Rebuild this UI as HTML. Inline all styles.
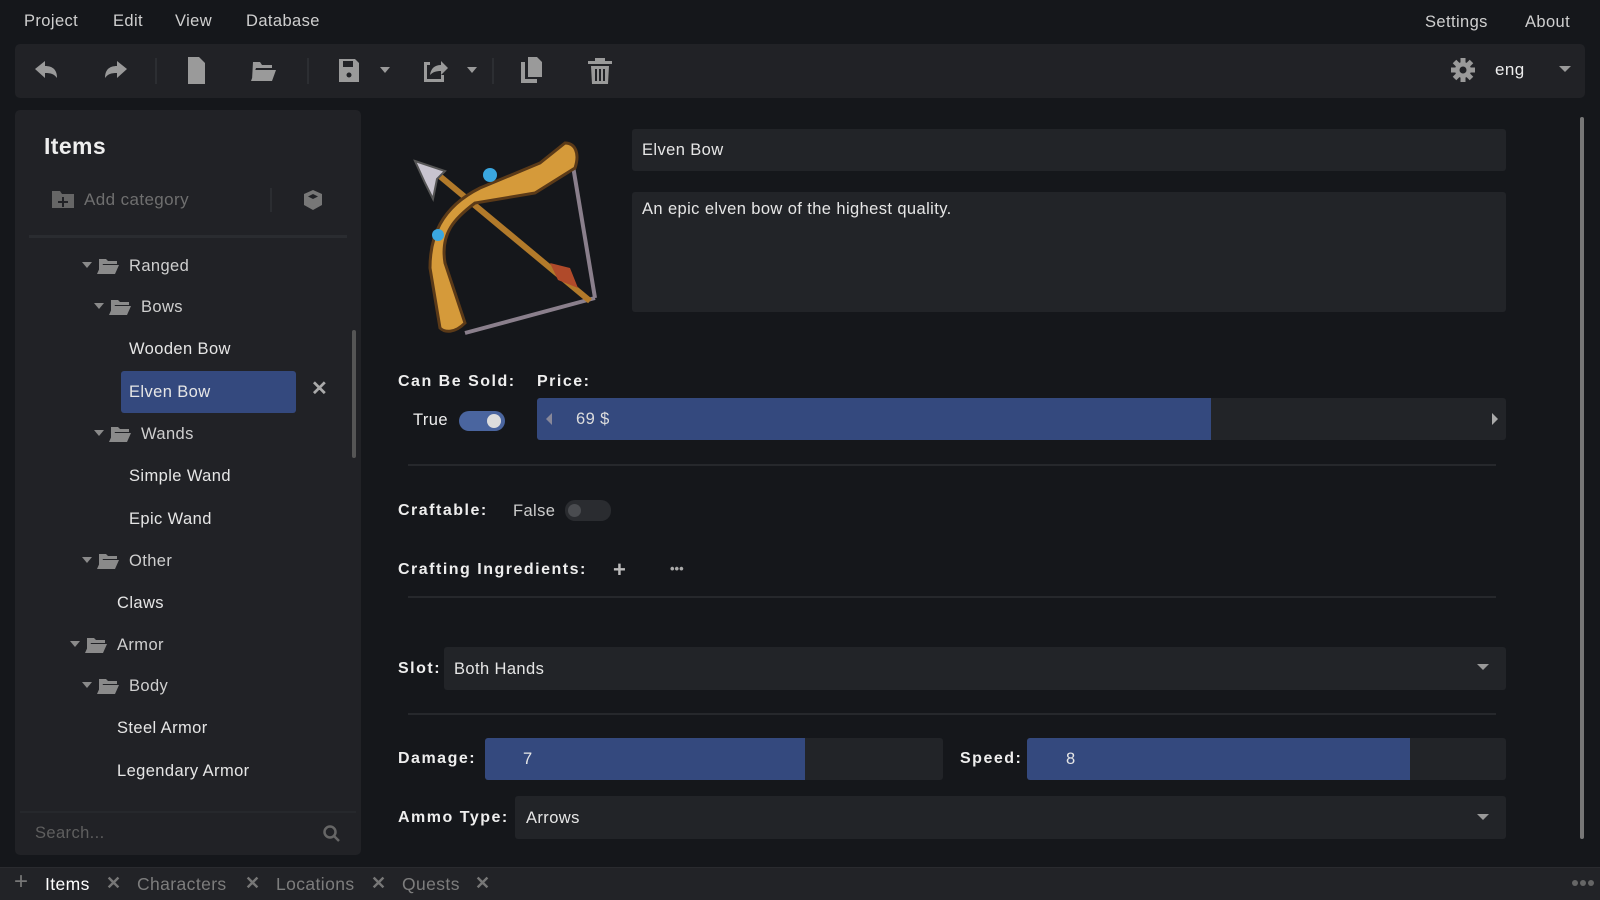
<!DOCTYPE html>
<html><head><meta charset="utf-8"><style>
*{box-sizing:border-box;margin:0;padding:0}
body{width:1600px;height:900px;background:#15171b;font-family:"Liberation Sans",sans-serif;color:#e6e6e6;position:relative;overflow:hidden;font-size:16.5px;letter-spacing:0.4px}
.a{position:absolute;white-space:nowrap}
.menu{color:#cfcfcf;font-size:16.5px;top:12px}
.panel{background:#212226;border-radius:5px}
.lbl{font-weight:bold;letter-spacing:1.5px;color:#eee;font-size:16px}
.inp{background:#222428;border-radius:3px}
.tree{color:#cfcfcf}
.gray{color:#8a8a8a}
.sep{position:absolute;height:2px;background:#26282c}
.tab{color:#7d7d7d;font-size:17.5px;top:874px}
.x{color:#777;font-weight:bold;font-size:18px;top:873px}
</style></head><body>
<div class="a menu" style="left:24px">Project</div>
<div class="a menu" style="left:113px">Edit</div>
<div class="a menu" style="left:175px">View</div>
<div class="a menu" style="left:246px">Database</div>
<div class="a menu" style="left:1425px;top:13px">Settings</div>
<div class="a menu" style="left:1525px;top:13px">About</div>

<div class="a panel" style="left:15px;top:44px;width:1570px;height:54px"></div>
<svg class="a" style="left:15px;top:44px" width="1570" height="54" fill="#9a9a9a">
<path d="M20 25 l10-8 v5 c8 0 12 4 12 12 c-3-4-6-5-12-5 v5z"/>
<path d="M112 25 l-10-8 v5 c-8 0-12 4-12 12 c3-4 6-5 12-5 v5z"/>
<rect x="140" y="14" width="2" height="26" fill="#2c2e32"/>
<path d="M173 13 h11 l6 6 v21 h-17z"/>
<path d="M238 18 h7 l2 3 h10 v3 h-16 l-4 12 h-0z M240 26 h21 l-4 11 h-21z"/>
<rect x="292" y="14" width="2" height="26" fill="#2c2e32"/>
<path d="M324 15 h16 l4 4 v19 h-20z" /><rect x="328" y="17" width="10" height="6" fill="#212226"/><circle cx="334" cy="31" r="2.5" fill="#212226"/>
<path d="M365 23 h10 l-5 6z"/>
<path d="M409 18 h6 v3 h-3 v14 h14 v-4 h3 v7 h-20z M415 31 c1-7 5-10 11-10 v-4 l7 7 l-7 7 v-4 c-5 0-8 1-11 4z"/>
<path d="M452 23 h10 l-5 6z"/>
<rect x="477" y="14" width="2" height="26" fill="#2c2e32"/>
<path d="M506 18 h4 v17 h12 v4 h-16z M513 13 h9 l5 5 v15 h-14z"/>
<path d="M580 14 h10 v3 h7 v3 h-24 v-3 h7z M576 22 h18 l-1 18 h-16z"/><rect x="580" y="25" width="2" height="12" fill="#212226"/><rect x="584" y="25" width="2" height="12" fill="#212226"/><rect x="588" y="25" width="2" height="12" fill="#212226"/>
<g transform="translate(1448,26)"><circle r="8"/><g><rect x="-2.5" y="-12" width="5" height="24"/><rect x="-12" y="-2.5" width="24" height="5"/><rect x="-2.5" y="-12" width="5" height="24" transform="rotate(45)"/><rect x="-2.5" y="-12" width="5" height="24" transform="rotate(-45)"/></g><circle r="3.5" fill="#212226"/></g>
<path d="M1544 22 h12 l-6 6z"/>
</svg>
<div class="a" style="left:1495px;top:60px;color:#eee;font-size:17px">eng</div>

<div class="a panel" style="left:15px;top:110px;width:346px;height:745px"></div>
<div class="a" style="left:44px;top:133px;font-size:23px;font-weight:bold;color:#eee">Items</div>
<svg class="a" style="left:52px;top:189px" width="24" height="20" fill="#666"><path d="M0 2 h8 l2 3 h12 v14 h-22z"/><path d="M10 8 h2 v4 h4 v2 h-4 v4 h-2 v-4 h-4 v-2 h4z" fill="#212226"/></svg>
<div class="a gray" style="left:84px;top:190px;font-size:17px;color:#6f6f6f">Add category</div>
<div class="a" style="left:270px;top:188px;width:2px;height:24px;background:#2b2d31"></div>
<svg class="a" style="left:302px;top:189px" width="22" height="22" fill="#777"><path d="M11 1 l9 4 v11 l-9 5 l-9-5 v-11z"/><path d="M11 5 l5 2.5 l-5 2.5 l-5-2.5z" fill="#212226"/></svg>
<div class="sep" style="left:29px;top:235px;width:318px;height:3px;background:#2a2c30"></div>

<svg class="a" style="left:0;top:0" width="360" height="900" fill="#8a8a8a">
<g id="f"><path d="M82 262 h10 l-5 6z"/><path d="M99 259 h7 l2 2 h9 v3 h-14 l-4 9 z M101 265 h18 l-4 9 h-18z"/></g>
<use href="#f" transform="translate(12,41)"/><use href="#f" transform="translate(12,168)"/><use href="#f" transform="translate(0,295)"/><use href="#f" transform="translate(-12,379)"/><use href="#f" transform="translate(0,420)"/>
</svg>
<div class="a tree" style="left:129px;top:257px">Ranged</div>
<div class="a tree" style="left:141px;top:298px">Bows</div>
<div class="a" style="left:129px;top:340px">Wooden Bow</div>
<div class="a" style="left:121px;top:371px;width:175px;height:42px;background:#34497e;border-radius:3px"></div>
<div class="a" style="left:129px;top:383px">Elven Bow</div>
<div class="a" style="left:311px;top:376px;color:#aaa;font-size:20px;font-weight:bold">✕</div>
<div class="a tree" style="left:141px;top:425px">Wands</div>
<div class="a" style="left:129px;top:467px">Simple Wand</div>
<div class="a" style="left:129px;top:510px">Epic Wand</div>
<div class="a tree" style="left:129px;top:552px">Other</div>
<div class="a" style="left:117px;top:594px">Claws</div>
<div class="a tree" style="left:117px;top:636px">Armor</div>
<div class="a tree" style="left:129px;top:677px">Body</div>
<div class="a" style="left:117px;top:719px">Steel Armor</div>
<div class="a" style="left:117px;top:762px">Legendary Armor</div>
<div class="a" style="left:352px;top:330px;width:4px;height:128px;background:#555;border-radius:2px"></div>
<div class="sep" style="left:20px;top:811px;width:336px"></div>
<div class="a" style="left:35px;top:824px;color:#5f5f5f;font-size:16.5px">Search...</div>
<svg class="a" style="left:322px;top:824px" width="20" height="20" fill="none" stroke="#666" stroke-width="2.5"><circle cx="8" cy="8" r="5.5"/><path d="M12 12 l5 5"/></svg>

<svg class="a" style="left:410px;top:133px" width="195" height="220">
<line x1="160" y1="15" x2="185" y2="165" stroke="#8a7f8c" stroke-width="4"/>
<line x1="185" y1="165" x2="55" y2="200" stroke="#8a7f8c" stroke-width="4"/>
<line x1="20" y1="35" x2="180" y2="168" stroke="#b27a2a" stroke-width="6"/>
<path d="M5 28 l30 10 l-8 8 l-4 20 l-8-16z" fill="#c8c4cf" stroke="#555" stroke-width="2"/>
<path d="M140 130 l20 5 l8 20 l-20-8z" fill="#b04a2a"/>
<path d="M155 10 c10 0 15 10 10 25 l-40 25 l-60 10 c-20 15-35 30-30 60 l20 60 c-10 10-20 10-25 5 l-10-60 c0-30 10-60 50-80 l60-25z" fill="#d59a3a" stroke="#5b3a18" stroke-width="3"/>
<circle cx="80" cy="42" r="7" fill="#3aa7e0"/><circle cx="28" cy="102" r="6" fill="#3aa7e0"/>
</svg>

<div class="a inp" style="left:632px;top:129px;width:874px;height:42px"></div>
<div class="a" style="left:642px;top:141px">Elven Bow</div>
<div class="a inp" style="left:632px;top:192px;width:874px;height:120px"></div>
<div class="a" style="left:642px;top:200px">An epic elven bow of the highest quality.</div>

<div class="a lbl" style="left:398px;top:373px">Can Be Sold:</div>
<div class="a lbl" style="left:537px;top:373px">Price:</div>
<div class="a" style="left:413px;top:411px;color:#eee">True</div>
<div class="a" style="left:459px;top:411px;width:46px;height:20px;border-radius:10px;background:#4a659f"></div>
<div class="a" style="left:487px;top:414px;width:14px;height:14px;border-radius:7px;background:#ddd"></div>
<div class="a inp" style="left:537px;top:398px;width:969px;height:42px"></div>
<div class="a" style="left:537px;top:398px;width:674px;height:42px;background:#34497e;border-radius:3px 0 0 3px"></div>
<svg class="a" style="left:544px;top:412px" width="12" height="14" fill="#889"><path d="M8 1 v12 l-6-6z"/></svg>
<svg class="a" style="left:1489px;top:412px" width="12" height="14" fill="#aaa"><path d="M3 1 v12 l6-6z"/></svg>
<div class="a" style="left:576px;top:410px;color:#ddd">69 $</div>
<div class="sep" style="left:408px;top:464px;width:1088px"></div>

<div class="a lbl" style="left:398px;top:502px">Craftable:</div>
<div class="a" style="left:513px;top:502px;color:#ccc">False</div>
<div class="a" style="left:565px;top:500px;width:46px;height:21px;border-radius:10px;background:#2a2c30"></div>
<div class="a" style="left:568px;top:504px;width:13px;height:13px;border-radius:7px;background:#4a4c50"></div>

<div class="a lbl" style="left:398px;top:561px">Crafting Ingredients:</div>
<div class="a" style="left:613px;top:557px;font-size:22px;color:#bbb;font-weight:bold">+</div>
<div class="a" style="left:670px;top:561px;font-size:13px;color:#aaa;font-weight:bold;letter-spacing:0">•••</div>
<div class="sep" style="left:408px;top:596px;width:1088px"></div>

<div class="a lbl" style="left:398px;top:660px">Slot:</div>
<div class="a inp" style="left:444px;top:647px;width:1062px;height:43px"></div>
<div class="a" style="left:454px;top:660px">Both Hands</div>
<svg class="a" style="left:1476px;top:662px" width="14" height="10" fill="#999"><path d="M1 2 h12 l-6 6z"/></svg>
<div class="sep" style="left:408px;top:713px;width:1088px"></div>

<div class="a lbl" style="left:398px;top:750px">Damage:</div>
<div class="a inp" style="left:485px;top:738px;width:458px;height:42px"></div>
<div class="a" style="left:485px;top:738px;width:320px;height:42px;background:#34497e;border-radius:3px 0 0 3px"></div>
<div class="a" style="left:523px;top:750px">7</div>
<div class="a lbl" style="left:960px;top:750px">Speed:</div>
<div class="a inp" style="left:1027px;top:738px;width:479px;height:42px"></div>
<div class="a" style="left:1027px;top:738px;width:383px;height:42px;background:#34497e;border-radius:3px 0 0 3px"></div>
<div class="a" style="left:1066px;top:750px">8</div>

<div class="a lbl" style="left:398px;top:809px">Ammo Type:</div>
<div class="a inp" style="left:515px;top:796px;width:991px;height:43px"></div>
<div class="a" style="left:526px;top:809px">Arrows</div>
<svg class="a" style="left:1476px;top:812px" width="14" height="10" fill="#999"><path d="M1 2 h12 l-6 6z"/></svg>
<div class="a" style="left:1580px;top:117px;width:4px;height:722px;background:#777;border-radius:2px"></div>

<div class="a" style="left:0;top:867px;width:1600px;height:33px;background:#222327;border-top:1px solid #2a2b2f"></div>
<div class="a" style="left:14px;top:868px;color:#777;font-size:24px">+</div>
<div class="a" style="left:45px;top:874px;color:#fff;font-size:17.5px">Items</div>
<div class="a x" style="left:106px">✕</div>
<div class="a tab" style="left:137px">Characters</div>
<div class="a x" style="left:245px">✕</div>
<div class="a tab" style="left:276px">Locations</div>
<div class="a x" style="left:371px">✕</div>
<div class="a tab" style="left:402px">Quests</div>
<div class="a x" style="left:475px">✕</div>
<div class="a" style="left:1572px;top:880px;width:6px;height:6px;border-radius:3px;background:#666"></div>
<div class="a" style="left:1580px;top:880px;width:6px;height:6px;border-radius:3px;background:#666"></div>
<div class="a" style="left:1588px;top:880px;width:6px;height:6px;border-radius:3px;background:#666"></div>
</body></html>
